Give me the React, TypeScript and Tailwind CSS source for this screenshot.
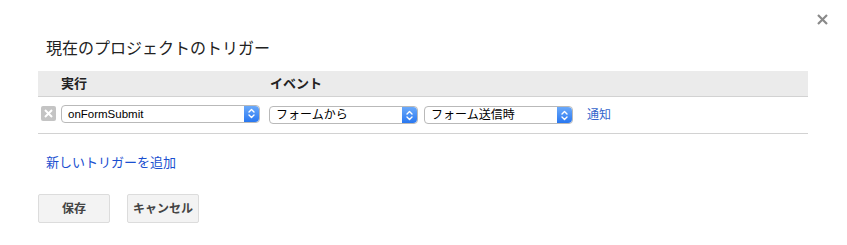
import React from "react";

const jp = { fontFamily: '"Liberation Sans", "Noto Sans CJK JP", sans-serif' };

function Stepper() {
  return (
    <span className="flex h-full w-[15px] items-center justify-center rounded-r-[4px] bg-gradient-to-b from-[#6aa9fa] to-[#2877f0]">
      <svg width="7" height="11" viewBox="0 0 7 11" fill="none" stroke="white" strokeWidth="1.4" strokeLinecap="round" strokeLinejoin="round">
        <path d="M1 4 L3.5 1.5 L6 4" />
        <path d="M1 7 L3.5 9.5 L6 7" />
      </svg>
    </span>
  );
}

function Select({ label, width, latin }: { label: string; width: string; latin?: boolean }) {
  return (
    <div className={`flex h-[18px] items-stretch rounded-[4px] border border-[#b9b9b9] bg-white ${width}`}>
      <span className={`flex-1 truncate pl-[6px] leading-[16px] text-black ${latin ? "text-[11.5px]" : "text-[12px]"}`}>{label}</span>
      <Stepper />
    </div>
  );
}

export default function App() {
  return (
    <div className="relative h-[245px] w-[847px] bg-white" style={jp}>
      <button className="absolute right-[19px] top-[14px] text-[#8a8a8a]">
        <svg width="11" height="11" viewBox="0 0 11 11" stroke="currentColor" strokeWidth="2.2">
          <path d="M1 1 L10 10 M10 1 L1 10" />
        </svg>
      </button>

      <div className="pt-[39px]">
        <h2 className="pl-[46px] text-[16px] leading-[20px] text-[#222]">現在のプロジェクトのトリガー</h2>

        <div className="ml-[38px] mt-[12px] w-[770px]">
          <div className="flex h-[26px] items-center border-b border-[#d2d2d2] bg-[#ebebeb] text-[13px] font-bold text-[#222]">
            <span className="w-[232px] pl-[23px]">実行</span>
            <span>イベント</span>
          </div>
          <div className="flex h-[37px] items-center border-b border-[#d2d2d2] pl-[3px]">
            <span className="mr-[5px] mt-[-3px] flex h-[15px] w-[15px] items-center justify-center rounded-[2px] bg-[#c4c4c4]">
              <svg width="9" height="9" viewBox="0 0 9 9" stroke="white" strokeWidth="2">
                <path d="M1 1 L8 8 M8 1 L1 8" />
              </svg>
            </span>
            <div className="mt-[-3px]">
              <Select label="onFormSubmit" width="w-[199px]" latin />
            </div>
            <div className="ml-[9px]">
              <Select label="フォームから" width="w-[149px]" />
            </div>
            <div className="ml-[6px]">
              <Select label="フォーム送信時" width="w-[149px]" />
            </div>
            <a className="ml-[14px] text-[12px] text-[#3366cc]">通知</a>
          </div>
        </div>

        <a className="ml-[46px] mt-[21px] block text-[13px] leading-[16px] text-[#1a4fd0]">新しいトリガーを追加</a>

        <div className="ml-[38px] mt-[23px] flex gap-[17px]">
          <button className="h-[29px] w-[72px] rounded-[2px] border border-[#dcdcdc] bg-[#f3f3f3] text-[12px] font-bold text-[#444]">保存</button>
          <button className="h-[29px] w-[72px] rounded-[2px] border border-[#dcdcdc] bg-[#f3f3f3] text-[12px] font-bold text-[#444]">キャンセル</button>
        </div>
      </div>
    </div>
  );
}
